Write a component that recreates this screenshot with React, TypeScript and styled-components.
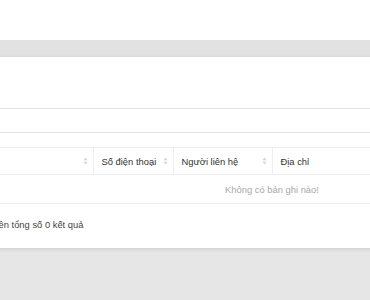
import styled, { createGlobalStyle } from 'styled-components';

const GlobalStyle = createGlobalStyle`
  html, body {
    margin: 0;
    padding: 0;
    background: #fff;
    overflow: hidden;
  }
  body {
    font-family: "Liberation Sans", Arial, sans-serif;
    color: #333;
  }
`;

const columns = [
  { key: 'name', title: '', width: 103, sortable: true },
  { key: 'phone', title: 'Số điện thoại', width: 80, sortable: true },
  { key: 'contact', title: 'Người liên hệ', width: 99, sortable: true },
  { key: 'address', title: 'Địa chỉ', width: 282, sortable: false },
];

function SortIcon() {
  return (
    <svg width="5" height="8" viewBox="0 0 5 8">
      <path d="M2.5 0.5 L4.6 3.2 H0.4 Z" fill="#d4d4d4" />
      <path d="M2.5 7.5 L4.6 4.8 H0.4 Z" fill="#d4d4d4" />
    </svg>
  );
}

function App() {
  return (
    <>
      <GlobalStyle />
      <TopBar />
      <Main>
        <Card>
          <SearchInput type="text" />
          <Table>
            <colgroup>
              {columns.map((c) => (
                <col key={c.key} style={{ width: c.width }} />
              ))}
            </colgroup>
            <thead>
              <tr>
                {columns.map((c) => (
                  <HeadCell key={c.key}>
                    <HeadInner>
                      <span>{c.title}</span>
                      {c.sortable && <SortIcon />}
                    </HeadInner>
                  </HeadCell>
                ))}
              </tr>
            </thead>
            <tbody>
              <tr>
                <EmptyCell colSpan={columns.length}>Không có bản ghi nào!</EmptyCell>
              </tr>
            </tbody>
          </Table>
          <Footer>Trên tổng số 0 kết quả</Footer>
        </Card>
      </Main>
    </>
  );
}

const TopBar = styled.div`
  height: 40px;
  background: #fff;
`;

const Main = styled.div`
  box-sizing: border-box;
  height: 260px;
  padding-top: 17px;
  background: linear-gradient(#e2e2e2, #e2e2e2 17px, #e6e6e6 17px);
`;

const Card = styled.div`
  margin-left: -25px;
  width: 596px;
  height: 191px;
  box-sizing: border-box;
  padding: 51px 16px 0;
  background: #fff;
  box-shadow: 0 1px 4px rgba(0, 0, 0, 0.12);
`;

const SearchInput = styled.input`
  display: block;
  width: 100%;
  height: 25px;
  box-sizing: border-box;
  border: 1px solid #e4e4e4;
  border-radius: 2px;
  outline: none;
  margin: 0 0 14px;
`;

const Table = styled.table`
  width: 564px;
  margin-left: -1px;
  border-collapse: collapse;
  table-layout: fixed;
  font-size: 9.4px;
`;

const HeadCell = styled.th`
  height: 26px;
  padding: 0 5px 0 8px;
  border-top: 1px solid #eeeeee;
  border-bottom: 1px solid #eeeeee;
  border-right: 1px solid #eeeeee;
  font-weight: normal;
  text-align: left;
  color: #333;
  &:last-child {
    border-right: none;
  }
`;

const HeadInner = styled.div`
  display: flex;
  align-items: center;
  justify-content: space-between;
  white-space: nowrap;
`;

const EmptyCell = styled.td`
  height: 26px;
  text-align: center;
  color: #a8a8a8;
  border-bottom: 1px solid #eeeeee;
`;

const Footer = styled.div`
  margin-top: 15px;
  margin-left: -1px;
  font-size: 9.4px;
  color: #444;
`;

export default App;
